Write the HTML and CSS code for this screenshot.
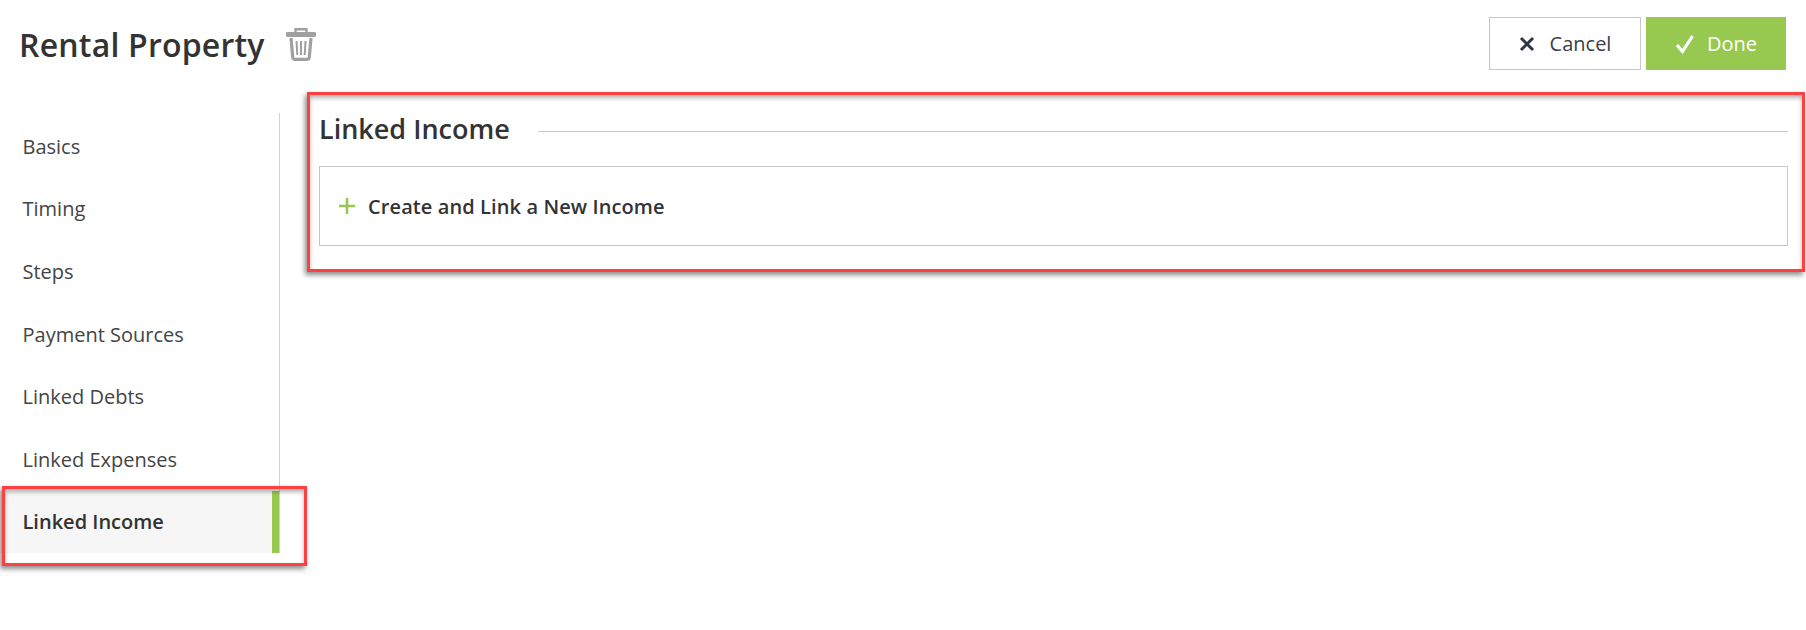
FILE: index.html
```html
<!DOCTYPE html>
<html lang="en">
<head>
  <meta charset="UTF-8" />
  <title>Rental Property</title>
  <link rel="stylesheet" href="styles.css">
</head>
<body>
  <header class="top-bar">
    <div class="title-group">
      <h1>Rental Property</h1>
      <svg class="trash-icon" width="30" height="33" viewBox="0 0 30 33" fill="none">
        <path d="M9.5 5V1.2h11V5" stroke="#a0a0a0" stroke-width="2.4"/>
        <path d="M2 6.6h26" stroke="#a0a0a0" stroke-width="5" stroke-linecap="round"/>
        <path d="M5 10l1.7 19c.1 1.6 1 2.4 2.4 2.4h11.8c1.4 0 2.3-.8 2.4-2.4L25 10" stroke="#a0a0a0" stroke-width="3.2"/>
        <path d="M10.5 13l.8 14M15 13v14M19.5 13l-.8 14" stroke="#a0a0a0" stroke-width="2"/>
      </svg>
    </div>
    <div class="actions">
      <button class="btn btn-cancel">
        <svg width="16" height="16" viewBox="0 0 16 16"><path d="M2 2l12 12M14 2L2 14" stroke="#2f3640" stroke-width="3"/></svg>
        Cancel
      </button>
      <button class="btn btn-done">
        <svg width="20" height="20" viewBox="0 0 20 20" fill="none"><path d="M2 11l5.5 6.5L17.5 2" stroke="#fff" stroke-width="3.2"/></svg>
        Done
      </button>
    </div>
  </header>

  <div class="layout">
    <nav class="side-nav">
      <a class="nav-item">Basics</a>
      <a class="nav-item">Timing</a>
      <a class="nav-item">Steps</a>
      <a class="nav-item">Payment Sources</a>
      <a class="nav-item">Linked Debts</a>
      <a class="nav-item">Linked Expenses</a>
      <a class="nav-item active">Linked Income</a>
    </nav>

    <main class="content">
      <div class="section-head">
        <h2>Linked Income</h2>
        <span class="section-line"></span>
      </div>
      <div class="link-box">
        <svg width="18" height="18" viewBox="0 0 18 18"><path d="M9 1v16M1 9h16" stroke="#97c950" stroke-width="2.6"/></svg>
        <span>Create and Link a New Income</span>
      </div>
    </main>
  </div>

  <div class="callout callout-nav"></div>
  <div class="callout callout-main"></div>
</body>
</html>
```

FILE: styles.css
```css
body {
  font-family: "Open Sans", Arial, sans-serif;
  color: #333;
  background: #fff;
  margin: 0;
  height: 630px;
  overflow: hidden;
  position: relative;
}
.top-bar {
  display: flex;
  justify-content: space-between;
  align-items: flex-start;
  height: 113px;
  padding: 17px 20px 0 19px;
  box-sizing: border-box;
}
.title-group {
  display: flex;
  align-items: center;
  gap: 21px;
  height: 55px;
}
h1 {
  font-size: 32px;
  font-weight: 600;
  letter-spacing: 0.2px;
  margin: 0;
  color: #333;
}
.actions {
  display: flex;
  gap: 5px;
}
.btn {
  display: flex;
  align-items: center;
  justify-content: center;
  height: 53px;
  font-family: inherit;
  font-size: 20px;
  border-radius: 0;
  cursor: pointer;
}
.btn-cancel {
  width: 152px;
  gap: 15px;
  background: #fff;
  color: #3a3f47;
  border: 1px solid #c8c8c8;
}
.btn-done {
  width: 140px;
  gap: 12px;
  background: #97c950;
  color: #fff;
  border: none;
}
.layout {
  display: flex;
}
.side-nav {
  width: 280px;
  border-right: 1px solid #d0d0d0;
  box-sizing: border-box;
  height: 440px;
  display: flex;
  flex-direction: column;
  padding-top: 2px;
}
.nav-item {
  display: flex;
  align-items: center;
  flex: 0 0 62.6px;
  padding-left: 22.5px;
  font-size: 20px;
  color: #444;
  box-sizing: border-box;
}
.nav-item.active {
  font-weight: 600;
  color: #333;
  background: #f6f6f6;
  border-right: 7px solid #97c950;
}
.content {
  flex: 1;
  padding: 0 18px 0 39px;
}
.section-head {
  display: flex;
  align-items: center;
  gap: 28px;
  height: 30px;
  margin-bottom: 4px;
}
h2 {
  font-size: 27px;
  font-weight: 600;
  margin: 0;
}
.section-line {
  flex: 1;
  border-top: 1px solid #c8c8c8;
  margin-top: 6px;
}
.link-box {
  display: flex;
  align-items: center;
  gap: 12px;
  height: 80px;
  margin-top: 23px;
  padding-left: 18px;
  border: 1px solid #c8c8c8;
  box-sizing: border-box;
  font-size: 20px;
  font-weight: 600;
  letter-spacing: 0.1px;
}
.callout {
  position: absolute;
  border: 3px solid #ff4040;
  box-shadow: -2px 3px 5px rgba(0, 0, 0, 0.45), inset 0 3px 4px rgba(0, 0, 0, 0.3);
  box-sizing: border-box;
}
.callout-nav {
  left: 2px;
  top: 486px;
  width: 305px;
  height: 80px;
}
.callout-main {
  left: 307px;
  top: 92px;
  width: 1498px;
  height: 180px;
}
```
